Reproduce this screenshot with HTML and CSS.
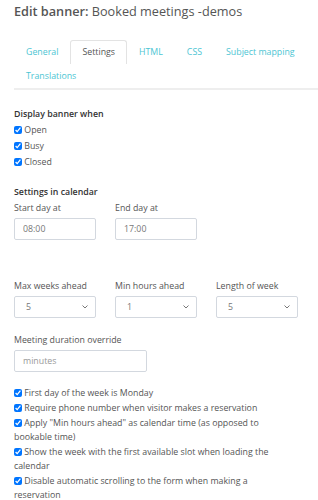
FILE: index.html
```html
<!DOCTYPE html>
<html lang="en">
<head>
    <meta charset="UTF-8">
    <meta name="viewport" content="width=device-width, initial-scale=1.0">
    <title>Edit banner</title>
    <link rel="stylesheet" href="styles.css">
</head>
<body>
    <div class="page">
        <h1 class="title"><strong>Edit banner:</strong> Booked meetings -demos</h1>

        <ul class="tabs">
            <li><a href="#">General</a></li>
            <li class="active"><a href="#">Settings</a></li>
            <li><a href="#">HTML</a></li>
            <li><a href="#">CSS</a></li>
            <li><a href="#">Subject mapping</a></li>
            <li><a href="#">Translations</a></li>
        </ul>

        <form class="settings">
            <h2 class="section-title">Display banner when</h2>
            <label class="check"><input type="checkbox" checked> Open</label>
            <label class="check"><input type="checkbox" checked> Busy</label>
            <label class="check"><input type="checkbox" checked> Closed</label>

            <h2 class="section-title calendar-title">Settings in calendar</h2>
            <div class="row">
                <div class="field">
                    <label for="startDay">Start day at</label>
                    <input type="text" id="startDay" value="08:00">
                </div>
                <div class="field">
                    <label for="endDay">End day at</label>
                    <input type="text" id="endDay" value="17:00">
                </div>
            </div>

            <div class="row selects">
                <div class="field">
                    <label for="maxWeeks">Max weeks ahead</label>
                    <select id="maxWeeks"><option>5</option></select>
                </div>
                <div class="field">
                    <label for="minHours">Min hours ahead</label>
                    <select id="minHours"><option>1</option></select>
                </div>
                <div class="field">
                    <label for="weekLength">Length of week</label>
                    <select id="weekLength"><option>5</option></select>
                </div>
            </div>

            <div class="field duration">
                <label for="duration">Meeting duration override</label>
                <input type="text" id="duration" placeholder="minutes">
            </div>

            <div class="options">
                <label class="check"><input type="checkbox" checked> First day of the week is Monday</label>
                <label class="check"><input type="checkbox" checked> Require phone number when visitor makes a reservation</label>
                <label class="check"><input type="checkbox" checked> Apply "Min hours ahead" as calendar time (as opposed to bookable time)</label>
                <label class="check"><input type="checkbox" checked> Show the week with the first available slot when loading the calendar</label>
                <label class="check"><input type="checkbox" checked> Disable automatic scrolling to the form when making a reservation</label>
            </div>
        </form>
    </div>
</body>
</html>
```

FILE: styles.css
```css
* {
    margin: 0;
    padding: 0;
    box-sizing: border-box;
}

body {
    background-color: #fff;
    font-family: "Open Sans", sans-serif;
    font-size: 8.8px;
    color: #555;
}

.page {
    padding: 1px 0 0 14px;
}

.title {
    font-size: 12.7px;
    font-weight: 400;
    color: #555;
    line-height: 20px;
}

.title strong {
    font-weight: 600;
}

.tabs {
    list-style: none;
    display: flex;
    flex-wrap: wrap;
    margin-top: 19px;
    border-bottom: 2px solid #eee;
}

.tabs li {
    height: 24px;
}

.tabs a {
    display: block;
    padding: 0 11px;
    line-height: 22px;
    color: #4cc5d3;
    text-decoration: none;
    border: 1px solid transparent;
    border-bottom: none;
    height: 24px;
}

.tabs li.active a {
    color: #555;
    border-color: #e3e3e3;
    border-radius: 3px 3px 0 0;
}

.settings {
    padding-top: 17px;
    padding-right: 14px;
}

.section-title {
    font-size: 8.8px;
    font-weight: 600;
    color: #333;
    line-height: 14px;
    margin-bottom: 1px;
}

.calendar-title {
    margin-top: 15px;
    margin-bottom: 2px;
}

.check {
    display: block;
    line-height: 16px;
    color: #555;
}

.check input {
    width: 8px;
    height: 8px;
    margin: 0;
    vertical-align: -1px;
}

.row {
    display: grid;
    grid-template-columns: 82px 82px 82px;
    column-gap: 19px;
}

.field label {
    display: block;
    line-height: 14px;
    margin-bottom: 3px;
    color: #555;
}

.field input[type="text"],
.field select {
    width: 100%;
    height: 22px;
    border: 1px solid #d3d8df;
    border-radius: 2px;
    padding: 0 8px;
    font-family: "Open Sans", sans-serif;
    font-size: 8.8px;
    color: #777;
    background-color: #fff;
}

.field select {
    appearance: none;
    padding-left: 11px;
    background-image: url("data:image/svg+xml,%3Csvg xmlns='http://www.w3.org/2000/svg' width='6' height='4' viewBox='0 0 6 4'%3E%3Cpath d='M0.5 0.5 L3 3 L5.5 0.5' fill='none' stroke='%23777' stroke-width='1'/%3E%3C/svg%3E");
    background-repeat: no-repeat;
    background-position: right 7px center;
}

.field input::placeholder {
    color: #999;
}

.selects {
    margin-top: 39px;
}

.duration {
    margin-top: 15px;
    width: 133px;
}

.options {
    margin-top: 14px;
    max-width: 272px;
}

.options .check {
    line-height: 14px;
    margin-bottom: 1px;
}
```
